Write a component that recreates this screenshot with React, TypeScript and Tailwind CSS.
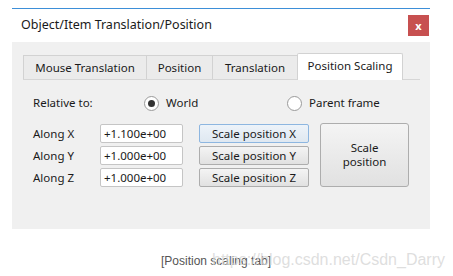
const ui = { fontFamily: '"Noto Sans", "Open Sans", sans-serif' };
const arial = { fontFamily: '"Liberation Sans", Arial, sans-serif' };

const tabs = ["Mouse Translation", "Position", "Translation", "Position Scaling"];
const tabWidths = ["w-[123px]", "w-[66px]", "w-[85px]", "w-[106px]"];

const axes = [
  { label: "Along X", value: "+1.100e+00", focus: true },
  { label: "Along Y", value: "+1.000e+00", focus: false },
  { label: "Along Z", value: "+1.000e+00", focus: false },
];

function Radio({ checked, label }: { checked: boolean; label: string }) {
  return (
    <div className="flex items-center gap-[7px]">
      <span className="flex h-[15px] w-[15px] items-center justify-center rounded-full border border-[#9a9a9a] bg-white">
        {checked && <span className="h-[7px] w-[7px] rounded-full bg-[#333]" />}
      </span>
      <span>{label}</span>
    </div>
  );
}

export default function App() {
  return (
    <div className="relative h-[276px] w-[453px] overflow-hidden bg-white">
      <div className="ml-[12px] w-[418px] pt-[8px]">
        <div className="border-t border-[#3d8fd8]" />
        {/* title bar */}
        <div className="flex h-[33px] items-center justify-between bg-white pl-[9px] pr-[1px]">
          <span className="text-[12.5px] text-[#1a1a1a]" style={ui}>
            Object/Item Translation/Position
          </span>
          <div className="flex h-[21px] w-[21px] items-center justify-center bg-[#c75050] text-[11px] font-bold leading-none text-white" style={ui}>
            x
          </div>
        </div>

        {/* body */}
        <div className="h-[187px] bg-[#f0f0f0] pl-[11px] pt-[11px] text-[11.5px] text-[#1a1a1a]" style={ui}>
          <div className="flex h-[26px] items-end">
            {tabs.map((t, i) => {
              const active = i === 3;
              return (
                <div
                  key={t}
                  className={
                    active
                      ? `${tabWidths[i]} -mb-px flex h-[27px] items-center justify-center rounded-t-[2px] border border-b-0 border-[#d2d2d2] bg-white pb-[2px]`
                      : `${tabWidths[i]} flex h-[24px] items-center justify-center border border-r-0 border-b-0 border-[#d2d2d2] bg-[#ebebeb]`
                  }
                >
                  {t}
                </div>
              );
            })}
          </div>
          <div className="w-[397px] border-t border-[#d6d6d6]">
            <div className="mt-[14px] flex h-[18px] items-center pl-[10px]">
              <span className="w-[111px]">Relative to:</span>
              <div className="w-[143px]">
                <Radio checked label="World" />
              </div>
              <Radio checked={false} label="Parent frame" />
            </div>

            <div className="mt-[12px] flex pl-[10px]">
              <div className="flex flex-col gap-[3px]">
                {axes.map((a) => (
                  <div key={a.label} className="flex h-[19px] items-center">
                    <span className="w-[67px]">{a.label}</span>
                    <div className="flex h-[19px] w-[83px] items-center rounded-[2px] border border-[#c5c5c5] bg-white pl-[3px]">
                      {a.value}
                    </div>
                    <div
                      className={
                        a.focus
                          ? "ml-[16px] flex h-[19px] w-[110px] items-center justify-center rounded-[2px] border border-[#8db6e0] bg-gradient-to-b from-[#edf3f9] to-[#dfe8f1]"
                          : "ml-[16px] flex h-[19px] w-[110px] items-center justify-center rounded-[2px] border border-[#adadad] bg-gradient-to-b from-[#f4f4f4] to-[#e1e1e1]"
                      }
                    >
                      Scale position {a.label.slice(-1)}
                    </div>
                  </div>
                ))}
              </div>
              <div className="-mt-px ml-[11px] flex h-[64px] w-[89px] flex-col items-center justify-center rounded-[3px] border border-[#adadad] bg-gradient-to-b from-[#f4f4f4] to-[#e1e1e1] leading-[14px]">
                <span>Scale</span>
                <span>position</span>
              </div>
            </div>
          </div>
        </div>
      </div>

      {/* caption + watermark */}
      <div className="relative mt-[24px] h-[16px] pl-[161px] text-[12px] leading-[16px]" style={arial}>
        <span className="text-[#555]">[Position scaling tab]</span>
        <span className="absolute left-[212px] top-[-1px] whitespace-nowrap text-[16px] leading-[16px] text-[#d6d6d6]/80">
          https://blog.csdn.net/Csdn_Darry
        </span>
      </div>
    </div>
  );
}
